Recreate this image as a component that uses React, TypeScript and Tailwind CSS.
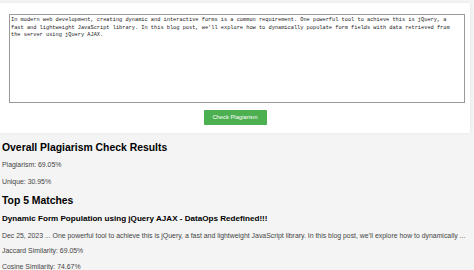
import React from "react";

export default function App() {
  const sans = { fontFamily: '"Liberation Sans", Arial, sans-serif' } as React.CSSProperties;
  return (
    <div className="w-[474px] h-[270px] overflow-hidden bg-[#f4f4f4] pt-[3px]" style={sans}>
      <div className="w-[470px] h-[130px] bg-white shadow-[0_0_3px_rgba(0,0,0,0.08)] pl-[9px] pr-[5px] pt-[11px] flex flex-col">
        <div
          className="h-[89px] border border-[#9a9a9a] bg-white px-[1px] pt-[2px] text-[5.3px] leading-[7.5px] text-[#222] whitespace-pre"
          style={{ fontFamily: '"Liberation Mono", "DejaVu Sans Mono", monospace' }}
        >
          <div>In modern web development, creating dynamic and interactive forms is a common requirement. One powerful tool to achieve this is jQuery, a</div>
          <div>fast and lightweight JavaScript library. In this blog post, we'll explore how to dynamically populate form fields with data retrieved from</div>
          <div>the server using jQuery AJAX.</div>
        </div>
        <div className="flex justify-center mt-[7px] pr-[4px]">
          <div className="w-[63px] h-[15px] bg-[#4caf50] rounded-[1px] text-white text-[5.8px] flex items-center justify-center">
            Check Plagiarism
          </div>
        </div>
      </div>
      <div className="pl-[2px] text-[#000]">
        <div className="mt-[9px] h-[12px] leading-[12px] text-[10.4px] font-bold">Overall Plagiarism Check Results</div>
        <div className="mt-[7px] h-[8px] leading-[8px] text-[6.9px] text-[#444]">Plagiarism: 69.05%</div>
        <div className="mt-[9px] h-[8px] leading-[8px] text-[6.9px] text-[#444]">Unique: 30.95%</div>
        <div className="mt-[9px] h-[12px] leading-[12px] text-[10.4px] font-bold">Top 5 Matches</div>
        <div className="mt-[7px] h-[10px] leading-[10px] text-[8.1px] font-bold">Dynamic Form Population using jQuery AJAX - DataOps Redefined!!!</div>
        <div className="mt-[8px] h-[8px] leading-[8px] text-[6.9px] text-[#444] whitespace-nowrap">Dec 25, 2023 ... One powerful tool to achieve this is jQuery, a fast and lightweight JavaScript library. In this blog post, we'll explore how to dynamically ...</div>
        <div className="mt-[7px] h-[8px] leading-[8px] text-[6.9px] text-[#444]">Jaccard Similarity: 69.05%</div>
        <div className="mt-[8px] h-[8px] leading-[8px] text-[6.9px] text-[#444]">Cosine Similarity: 74.67%</div>
      </div>
    </div>
  );
}
